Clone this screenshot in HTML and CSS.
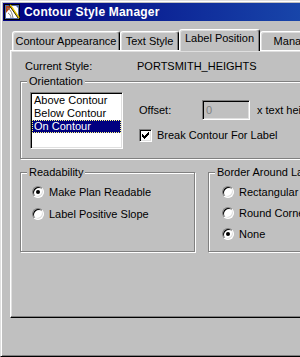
FILE: index.html
```html
<!DOCTYPE html>
<html lang="en">
<head>
    <meta charset="UTF-8">
    <title>Contour Style Manager</title>
    <link rel="stylesheet" href="styles.css">
</head>
<body>
    <div class="window">
        <div class="titlebar">
            <svg class="app-icon" viewBox="0 0 16 16">
                <rect x="0.5" y="0.5" width="15" height="15" fill="#5068a8" stroke="#000"/>
                <path d="M2 2h10l2 2v10H2z" fill="#fff"/>
                <path d="M2 2h6L2 9z" fill="#b84818"/>
                <path d="M3 4c3 1 5 4 6 10M4 9c2 1 3 3 3 5" stroke="#808080" fill="none"/>
                <path d="M6 1l9 13" stroke="#e8c800" stroke-width="2"/>
                <path d="M5 1l9 13" stroke="#000" stroke-width="0.8"/>
            </svg>
            <span class="title">Contour Style Manager</span>
        </div>
        <div class="dialog-body">
            <div class="tabs">
                <div class="tab tab-appearance">Contour Appearance</div>
                <div class="tab tab-text">Text Style</div>
                <div class="tab tab-label active">Label Position</div>
                <div class="tab tab-manage">Manage Styles</div>
            </div>
            <div class="panel">
                <div class="current-style">
                    <span class="current-label">Current Style:</span>
                    <span>PORTSMITH_HEIGHTS</span>
                </div>
                <fieldset class="group orientation">
                    <legend>Orientation</legend>
                    <div class="orientation-body">
                        <ul class="listbox">
                            <li>Above Contour</li>
                            <li>Below Contour</li>
                            <li class="selected">On Contour</li>
                        </ul>
                        <div class="orientation-options">
                            <div class="offset-row">
                                <span class="offset-label">Offset:</span>
                                <div class="textbox disabled">0</div>
                                <span class="unit">x text height</span>
                            </div>
                            <div class="check-row">
                                <span class="checkbox">
                                    <svg width="7" height="7" viewBox="0 0 7 7"><path d="M0 2H1V3H2V4H3V3H4V2H5V1H6V0H7V3H6V4H5V5H4V6H3V7H2V6H1V5H0Z" fill="#000"/></svg>
                                </span>
                                Break Contour For Label
                            </div>
                        </div>
                    </div>
                </fieldset>
                <div class="group-row">
                    <fieldset class="group readability">
                        <legend>Readability</legend>
                        <div class="radio-row"><span class="radio checked"></span>Make Plan Readable</div>
                        <div class="radio-row"><span class="radio"></span>Label Positive Slope</div>
                    </fieldset>
                    <fieldset class="group border-group">
                        <legend>Border Around Label</legend>
                        <div class="radio-row"><span class="radio"></span>Rectangular</div>
                        <div class="radio-row"><span class="radio"></span>Round Corners</div>
                        <div class="radio-row"><span class="radio checked"></span>None</div>
                    </fieldset>
                </div>
            </div>
        </div>
    </div>
</body>
</html>
```

FILE: styles.css
```css
html, body {
    margin: 0;
    height: 100%;
    overflow: hidden;
}
body {
    background: #c0c0c0;
    font-family: "Liberation Sans", Arial, sans-serif;
    font-size: 11px;
    color: #000;
}
.window {
    box-sizing: border-box;
    width: 420px;
    height: 357px;
    padding: 2px;
    background: #c0c0c0;
    border: 1px solid;
    border-color: #dfdfdf #000 #000 #dfdfdf;
    box-shadow: inset 1px 1px #fff, inset -1px -1px #808080;
}
.titlebar {
    display: flex;
    align-items: center;
    height: 18px;
    padding-left: 1px;
    background: linear-gradient(90deg, #000080 0, #1846aa 300px, #1084d0 100%);
    color: #fff;
    font-size: 12px;
    font-weight: bold;
    letter-spacing: 0.2px;
    white-space: nowrap;
}
.app-icon {
    flex: none;
    width: 16px;
    height: 16px;
    margin-right: 4px;
}
.dialog-body {
    padding: 8px 0 0 7px;
}
.tabs {
    display: flex;
    align-items: flex-end;
    height: 21px;
    padding-left: 2px;
}
.tab {
    box-sizing: border-box;
    flex: none;
    height: 19px;
    padding-top: 3px;
    line-height: 13px;
    text-align: center;
    white-space: nowrap;
    overflow: hidden;
    background: #c0c0c0;
    border: 1px solid;
    border-bottom: none;
    border-color: #fff #000 transparent #fff;
    border-radius: 3px 3px 0 0;
    box-shadow: inset -1px 0 #808080, inset 1px 1px #dfdfdf;
}
.tab.active {
    position: relative;
    z-index: 1;
    height: 22px;
    margin-bottom: -1px;
    padding-top: 2px;
}
.tab-appearance { width: 108px; }
.tab-text { width: 59px; }
.tab-label { width: 81px; }
.tab-manage { width: 100px; }
.panel {
    box-sizing: border-box;
    width: 404px;
    height: 268px;
    padding: 9px 9px 0 9px;
    border: 1px solid;
    border-color: #fff #000 #000 #fff;
    box-shadow: inset -1px -1px #808080, inset 1px 1px #dfdfdf;
}
.current-style {
    display: flex;
    padding-left: 5px;
    line-height: 13px;
}
.current-label {
    width: 112px;
}
.group {
    box-sizing: border-box;
    min-width: 0;
    margin: 2px 0 0;
    padding: 4px 6px 9px;
    border: 1px solid #808080;
    box-shadow: inset 1px 1px #fff, 1px 1px #fff;
}
.group legend {
    padding: 0 2px;
    line-height: 13px;
    background: #c0c0c0;
    white-space: nowrap;
}
.orientation-body {
    display: flex;
    align-items: flex-start;
}
.listbox {
    box-sizing: border-box;
    flex: none;
    width: 93px;
    height: 57px;
    margin: 0 0 0 3px;
    padding: 1px;
    list-style: none;
    background: #fff;
    border: 1px solid;
    border-color: #808080 #fff #fff #808080;
    box-shadow: inset 1px 1px #000, inset -1px -1px #dfdfdf;
}
.listbox li {
    padding-left: 2px;
    line-height: 13px;
    white-space: nowrap;
}
.listbox .selected {
    background: #000080;
    color: #fff;
    outline: 1px dotted #ffff80;
    outline-offset: -1px;
}
.orientation-options {
    margin: 8px 0 0 16px;
}
.offset-row {
    display: flex;
    align-items: center;
    height: 20px;
    line-height: 13px;
}
.offset-label {
    width: 63px;
}
.textbox {
    box-sizing: border-box;
    display: flex;
    align-items: center;
    width: 48px;
    height: 20px;
    padding-left: 3px;
    border: 1px solid;
    border-color: #808080 #fff #fff #808080;
    box-shadow: inset 1px 1px #000, inset -1px -1px #dfdfdf;
}
.textbox.disabled {
    background: #c0c0c0;
    color: #808080;
}
.unit {
    margin-left: 7px;
    white-space: nowrap;
}
.check-row {
    display: flex;
    align-items: center;
    margin-top: 9px;
    line-height: 13px;
    white-space: nowrap;
}
.checkbox {
    box-sizing: border-box;
    flex: none;
    width: 13px;
    height: 13px;
    padding: 2px;
    margin-right: 5px;
    background: #fff;
    border: 1px solid;
    border-color: #808080 #fff #fff #808080;
    box-shadow: inset 1px 1px #000, inset -1px -1px #dfdfdf;
}
.checkbox svg {
    display: block;
}
.group-row {
    display: flex;
    align-items: stretch;
    gap: 13px;
    margin-top: 7px;
}
.group-row .group {
    margin: 0;
    padding-top: 7px;
}
.readability {
    flex: none;
    width: 175px;
}
.border-group {
    flex: 1;
    padding-bottom: 10px;
}
.radio-row {
    display: flex;
    align-items: flex-start;
    line-height: 13px;
    white-space: nowrap;
}
.readability .radio-row {
    margin-left: 5px;
}
.readability .radio-row + .radio-row {
    margin-top: 9px;
}
.border-group .radio-row {
    margin-left: 7px;
}
.border-group .radio-row + .radio-row {
    margin-top: 8px;
}
.radio {
    box-sizing: border-box;
    display: flex;
    align-items: center;
    justify-content: center;
    flex: none;
    width: 12px;
    height: 12px;
    margin-right: 5px;
    background: #fff;
    border-radius: 50%;
    border: 1px solid;
    border-color: #808080 #fff #fff #808080;
    box-shadow: inset 1px 1px #000, inset -1px -1px #dfdfdf;
}
.radio.checked::after {
    content: "";
    width: 4px;
    height: 4px;
    border-radius: 50%;
    background: #000;
}
```
